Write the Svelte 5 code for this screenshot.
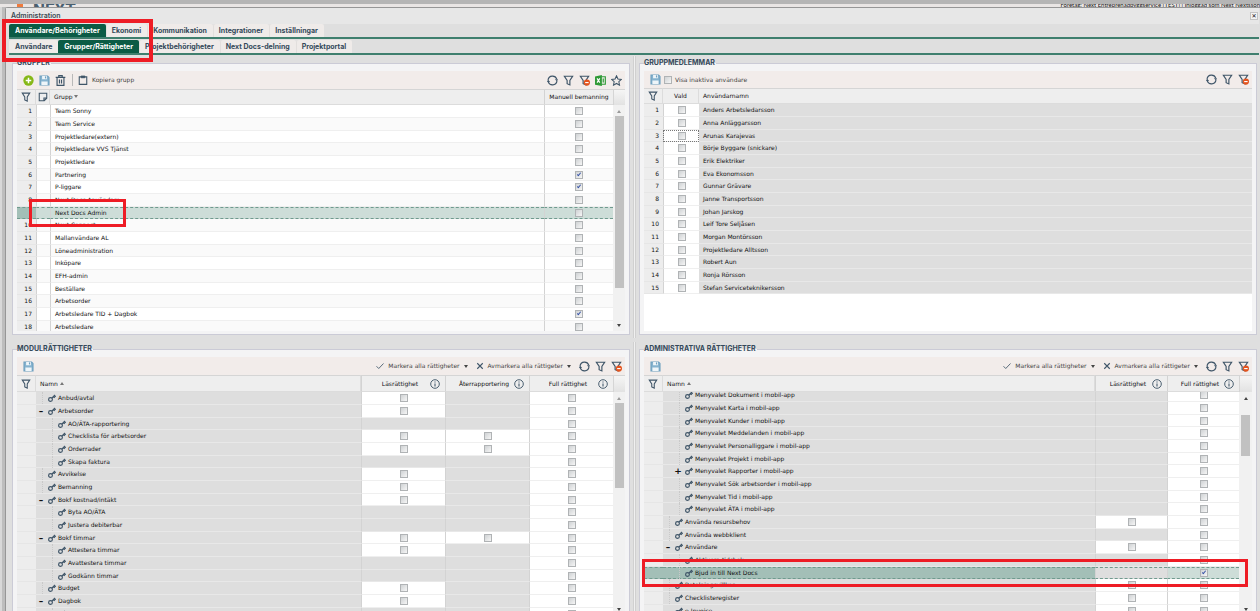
<script>
  const mainTabs = ['Användare/Behörigheter', 'Ekonomi', 'Kommunikation', 'Integrationer', 'Inställningar']
  const subTabs = ['Användare', 'Grupper/Rättigheter', 'Projektbehörigheter', 'Next Docs-delning', 'Projektportal']

  let mainTab = $state('Användare/Behörigheter')
  let subTab = $state('Grupper/Rättigheter')
  let showInactive = $state(false)

  let groups = $state([
    { name: 'Team Sonny' },
    { name: 'Team Service' },
    { name: 'Projektledare(extern)' },
    { name: 'Projektledare VVS Tjänst' },
    { name: 'Projektledare' },
    { name: 'Partnering', manual: true },
    { name: 'P-liggare', manual: true },
    { name: 'Next Docs Användare' },
    { name: 'Next Docs Admin' },
    { name: 'Next Connect' },
    { name: 'Mallanvändare AL' },
    { name: 'Löneadministration' },
    { name: 'Inköpare' },
    { name: 'EFH-admin' },
    { name: 'Beställare' },
    { name: 'Arbetsorder' },
    { name: 'Arbetsledare TID + Dagbok', manual: true },
    { name: 'Arbetsledare' },
  ])
  let selectedGroup = $state('Next Docs Admin')

  const members = [
    'Anders Arbetsledarsson', 'Anna Anläggarsson', 'Arunas Karajevas', 'Börje Byggare (snickare)',
    'Erik Elektriker', 'Eva Ekonomsson', 'Gunnar Grävare', 'Janne Transportsson', 'Johan Jarskog',
    'Leif Tore Seljåsen', 'Morgan Montörsson', 'Projektledare Alltsson', 'Robert Aun',
    'Ronja Rörsson', 'Stefan Serviceteknikersson',
  ]

  // level, sign of the expander, r = read box, b = report back box
  const modules = [
    { name: 'Anbud/avtal', level: 1, r: true },
    { name: 'Arbetsorder', level: 1, sign: '–', r: true },
    { name: 'AO/ÄTA-rapportering', level: 2 },
    { name: 'Checklista för arbetsorder', level: 2, r: true, b: true },
    { name: 'Orderrader', level: 2, r: true, b: true },
    { name: 'Skapa faktura', level: 2 },
    { name: 'Avvikelse', level: 1, r: true },
    { name: 'Bemanning', level: 1, r: true },
    { name: 'Bokf kostnad/intäkt', level: 1, sign: '–', r: true },
    { name: 'Byta AO/ÄTA', level: 2 },
    { name: 'Justera debiterbar', level: 2 },
    { name: 'Bokf timmar', level: 1, sign: '–', r: true, b: true },
    { name: 'Attestera timmar', level: 2, r: true },
    { name: 'Avattestera timmar', level: 2 },
    { name: 'Godkänn timmar', level: 2 },
    { name: 'Budget', level: 1, r: true },
    { name: 'Dagbok', level: 1, sign: '–', r: true },
    { name: 'Avattestera dagbok', level: 2 },
  ]

  const adminRights = [
    { name: 'Menyvalet Dokument i mobil-app', level: 2 },
    { name: 'Menyvalet Karta i mobil-app', level: 2 },
    { name: 'Menyvalet Kunder i mobil-app', level: 2 },
    { name: 'Menyvalet Meddelanden i mobil-app', level: 2 },
    { name: 'Menyvalet Personalliggare i mobil-app', level: 2 },
    { name: 'Menyvalet Projekt i mobil-app', level: 2 },
    { name: 'Menyvalet Rapporter i mobil-app', level: 2, sign: '+' },
    { name: 'Menyvalet Sök arbetsorder i mobil-app', level: 2 },
    { name: 'Menyvalet Tid i mobil-app', level: 2 },
    { name: 'Menyvalet ÄTA i mobil-app', level: 2 },
    { name: 'Använda resursbehov', level: 1, r: true },
    { name: 'Använda webbklient', level: 1 },
    { name: 'Användare', level: 1, sign: '–', r: true },
    { name: 'Aktivera tidsbok', level: 2 },
    { name: 'Bjud in till Next Docs', level: 2, full: true, selected: true },
    { name: 'Betalningsvillkor', level: 1, r: true },
    { name: 'Checklisteregister', level: 1, r: true },
    { name: 'e-Invoice', level: 1, sign: '–', r: true },
  ]

  function scrolledBy(node, top) {
    node.scrollTop = top
  }
</script>

{#snippet icon(name)}
  <svg class="icon" viewBox="0 0 16 16" fill="none" stroke="#3f5568" stroke-width="1.7" aria-hidden="true">
    {#if name === 'add'}
      <circle cx="8" cy="8" r="7.5" fill="#86b817" stroke="none" />
      <path d="M8 4v8M4 8h8" stroke="#fff" stroke-width="2.2" />
    {:else if name === 'save'}
      <path d="M1.5 1.5h11l2 2v11h-13z" fill="#86b3cf" stroke="#6d9fbf" />
      <path d="M4.5 1.5h7v4.5h-7zM3.5 9.5h9v5h-9z" fill="#eef5f9" stroke="none" />
      <path d="M9.5 2v3" stroke="#6d9fbf" />
    {:else if name === 'trash'}
      <path d="M1 3.5h14M5.5 3V1h5v2M3 4v11h10V4M6.5 6.5v6M9.5 6.5v6" />
    {:else if name === 'paste'}
      <path d="M2 3h12v12H2z" />
      <path d="M5 1.5h6v3H5z" fill="#3f5568" stroke-width="1" />
    {:else if name === 'refresh'}
      <path d="M1.5 7A6.6 6.6 0 0 1 14.2 6M14.5 9A6.6 6.6 0 0 1 1.8 10" />
      <path d="M11.5 6h4.500l-1.500 3.500zM4.500 10H0l1.500-3.500z" fill="#3f5568" stroke="none" />
    {:else if name === 'filter' || name === 'unfilter'}
      <path d="M2 1.8h12L10 8v6.5l-4-1.8V8z" />
      {#if name === 'unfilter'}
        <circle cx="11.5" cy="11" r="4.5" fill="#e4541e" stroke="none" />
        <path d="M9 11h5" stroke="#fff" />
      {/if}
    {:else if name === 'excel'}
      <path d="M9 2.5h6v11H9" stroke="#2f9a37" />
      <path d="M0 2l10-2v16L0 14z" fill="#2f9a37" stroke="none" />
      <path d="M3 5l4 6M7 5l-4 6" stroke="#fff" />
      <path d="M12 5v6" stroke="#2f9a37" />
    {:else if name === 'star'}
      <path d="M8 1.2l2.100 4.600 5 .6-3.700 3.400 1 5L8 12.300l-4.400 2.500 1-5L.9 6.400l5-.6z" stroke-width="1.5" />
    {:else if name === 'note'}
      <path d="M2 2h12v8l-4 4H2zM14 9.5H9.5V14" />
    {:else if name === 'check'}
      <path d="M1 8.5l4.500 4.500L15 3" />
    {:else if name === 'cross'}
      <path d="M2.5 2.5l11 11M13.5 2.5l-11 11" stroke-width="2.2" />
    {:else if name === 'info'}
      <circle cx="8" cy="8" r="6.9" stroke-width="1.5" />
      <path d="M8 7v5M8 3.8v1.8" />
    {:else if name === 'key'}
      <circle cx="5" cy="11" r="3.8" stroke-width="2.3" />
      <path d="M7.5 8.5L14 2M10.5 4.5l3 3M12.5 2.5l3 3" stroke-width="2.3" />
    {/if}
  </svg>
{/snippet}

{#snippet tool(name, label)}
  <button class="tool" title={label} aria-label={label}>{@render icon(name)}</button>
{/snippet}

{#snippet filterTools()}
  {@render tool('refresh', 'Uppdatera')}
  {@render tool('filter', 'Filtrera')}
  {@render tool('unfilter', 'Rensa filter')}
{/snippet}

{#snippet markTools()}
  <button class="text-tool mark">{@render icon('check')}<span>Markera alla rättigheter</span><i class="caret"></i></button>
  <button class="text-tool mark">{@render icon('cross')}<span>Avmarkera alla rättigeter</span><i class="caret"></i></button>
  {@render filterTools()}
{/snippet}

{#snippet scrollbar(kind)}
  <div class="scrollbar {kind}">
    <div class="corner"></div>
    <div class="track"><i class="up"></i><div class="thumb"></div><i class="down"></i></div>
  </div>
{/snippet}

{#snippet infoHead(text)}
  <th class="line"><div class="info-head"><span>{text}</span>{@render icon('info')}</div></th>
{/snippet}

{#snippet boxCell(row, show, label, checked = false)}
  <td class="line" class:off={!show}>
    {#if show}<input type="checkbox" {checked} aria-label="{label} {row.name}" />{/if}
  </td>
{/snippet}

{#snippet treeTable(rows, report)}
  <table class:report class:rights={!report}>
    <colgroup>
      <col class="c-num" /><col />
      <col class="c-right" />{#if report}<col class="c-right" />{/if}<col class="c-right" />
    </colgroup>
    <thead>
      <tr>
        <th>{@render icon('filter')}</th>
        <th class="name">Namn <i class="sort asc"></i></th>
        {@render infoHead('Läsrättighet')}
        {#if report}{@render infoHead('Återrapportering')}{/if}
        {@render infoHead('Full rättighet')}
      </tr>
    </thead>
    <tbody>
      {#each rows as row}
        <tr class:selected={row.selected}>
          <td class="num"></td>
          <td class="off name-cell">
            <div class="tree">
              {#if row.level === 2}<span class="indent"></span>{/if}
              {#if row.sign}
                <button class="toggle" aria-label="Visa {row.name}">{row.sign}</button>
              {:else}
                <span class="branch"></span>
              {/if}
              {@render icon('key')}
              <span>{row.name}</span>
            </div>
          </td>
          {@render boxCell(row, row.r, 'Läsrättighet')}
          {#if report}{@render boxCell(row, row.b, 'Återrapportering')}{/if}
          {@render boxCell(row, true, 'Full rättighet', row.full)}
        </tr>
      {/each}
    </tbody>
  </table>
{/snippet}

<div class="page">
  <div class="browser-edge"></div>
  <div class="app-strip">
    <span class="logo"><i></i>NEXT</span>
    <span class="who">Företag: Next Entreprenadbyggservice [TEST] | Inloggad som Next Nextsson</span>
  </div>

  <main class="dialog">
    <header>
      <h1>Administration</h1>
      <button class="close" aria-label="Stäng">✕</button>
    </header>

    <nav>
      {#each mainTabs as tab}
        <button class:active={tab === mainTab} onclick={() => (mainTab = tab)}>{tab}</button>
      {/each}
    </nav>
    <nav>
      {#each subTabs as tab}
        <button class:active={tab === subTab} onclick={() => (subTab = tab)}>{tab}</button>
      {/each}
    </nav>

    <div class="content">
      <div class="row top">
        <fieldset>
          <legend>GRUPPER</legend>
          <div class="toolbar">
            {@render tool('add', 'Ny grupp')}
            {@render tool('save', 'Spara')}
            {@render tool('trash', 'Ta bort')}
            <span class="sep"></span>
            <button class="text-tool">{@render icon('paste')}<span>Kopiera grupp</span></button>
            <span class="grow"></span>
            {@render filterTools()}
            {@render tool('excel', 'Exportera till Excel')}
            {@render tool('star', 'Favorit')}
          </div>
          <div class="grid">
            <div class="scroll">
              <table class="groups">
                <colgroup><col class="c-num" /><col class="c-note" /><col /><col class="c-manual" /></colgroup>
                <thead>
                  <tr>
                    <th>{@render icon('filter')}</th>
                    <th>{@render icon('note')}</th>
                    <th class="name">Grupp <i class="sort desc"></i></th>
                    <th class="line">Manuell bemanning</th>
                  </tr>
                </thead>
                <tbody>
                  {#each groups as group, i}
                    <tr class:selected={group.name === selectedGroup} onclick={() => (selectedGroup = group.name)}>
                      <td class="num">{i + 1}</td>
                      <td class="line"></td>
                      <td class="line name">{group.name}</td>
                      <td class="line">
                        <input type="checkbox" bind:checked={group.manual} aria-label="Manuell bemanning {group.name}" />
                      </td>
                    </tr>
                  {/each}
                </tbody>
              </table>
            </div>
            {@render scrollbar('groups-bar')}
            <div class="marker group-marker"></div>
          </div>
        </fieldset>

        <div class="splitter"></div>

        <fieldset>
          <legend>GRUPPMEDLEMMAR</legend>
          <div class="toolbar low">
            {@render tool('save', 'Spara')}
            <label><input type="checkbox" bind:checked={showInactive} />Visa inaktiva användare</label>
            <span class="grow"></span>
            {@render filterTools()}
          </div>
          <div class="grid">
            <div class="scroll">
              <table class="members">
                <colgroup><col class="c-num" /><col class="c-picked" /><col /></colgroup>
                <thead>
                  <tr>
                    <th>{@render icon('filter')}</th>
                    <th>Vald</th>
                    <th class="name">Användarnamn</th>
                  </tr>
                </thead>
                <tbody>
                  {#each members as member, i}
                    <tr>
                      <td class="num">{i + 1}</td>
                      <td class="line" class:focused={i === 2}>
                        <input type="checkbox" aria-label="Vald {member}" />
                      </td>
                      <td class="off name">{member}</td>
                    </tr>
                  {/each}
                </tbody>
              </table>
            </div>
          </div>
        </fieldset>
      </div>

      <div class="row bottom">
        <fieldset>
          <legend>MODULRÄTTIGHETER</legend>
          <div class="toolbar">
            {@render tool('save', 'Spara')}
            <span class="grow"></span>
            {@render markTools()}
          </div>
          <div class="grid">
            <div class="scroll">{@render treeTable(modules, true)}</div>
            {@render scrollbar('modules-bar')}
          </div>
        </fieldset>

        <div class="splitter"></div>

        <fieldset>
          <legend>ADMINISTRATIVA RÄTTIGHETER</legend>
          <div class="toolbar">
            {@render tool('save', 'Spara')}
            <span class="grow"></span>
            {@render markTools()}
          </div>
          <div class="grid">
            <div class="scroll" use:scrolledBy={3}>{@render treeTable(adminRights, false)}</div>
            {@render scrollbar('admin-bar')}
            <div class="marker admin-marker"></div>
          </div>
        </fieldset>
      </div>
    </div>
    <div class="marker tab-marker"></div>
  </main>
</div>

<style>
  :global(body) {
    margin: 0;
    background: #b5b5b5;
  }
  .page {
    display: flex;
    flex-direction: column;
    height: 100vh;
    overflow: hidden;
    font-family: 'DejaVu Sans', sans-serif;
    font-size: 6px;
    line-height: 8px;
    color: #111;
    background: linear-gradient(90deg, #d8d8d8 2px, #bdbdbd 2px);
  }
  button {
    font: inherit;
    color: inherit;
    border: 0;
    padding: 0;
    background: none;
    cursor: pointer;
  }
  .browser-edge {
    flex: none;
    height: 4px;
    background: #b5b5b5;
  }
  .app-strip {
    flex: none;
    display: flex;
    justify-content: space-between;
    height: 3px;
    overflow: hidden;
    padding-left: 17px;
    background: #e9e5e4;
  }
  .logo {
    display: flex;
    gap: 10px;
    font-family: Roboto, sans-serif;
    font-size: 17px;
    line-height: 10px;
    font-weight: 700;
    color: #4a6070;
  }
  .logo i {
    width: 6px;
    height: 4px;
    background: #ee7a3c;
  }
  .who {
    height: 8px;
    margin-top: -3px;
    font-family: Lato, sans-serif;
    white-space: nowrap;
  }
  .dialog {
    position: relative;
    flex: 1;
    min-height: 0;
    display: flex;
    flex-direction: column;
    margin-left: 5px;
    padding: 0 1px 0 3px;
    border: 1px solid #969696;
    border-width: 1px 0 0 1px;
    border-radius: 3px 0 0 0;
    background: #dfdfdf;
  }
  header {
    flex: none;
    display: flex;
    align-items: center;
    justify-content: space-between;
    height: 16px;
    margin-left: -3px;
    padding: 0 1px 0 5px;
    background: #e7e7e7;
  }
  h1,
  nav button,
  legend {
    font-family: Inter, 'Liberation Sans', sans-serif;
    font-size: 7px;
    font-weight: 700;
  }
  h1 {
    margin: 0;
    font-weight: 600;
    color: #3c4a54;
  }
  .close {
    width: 8px;
    height: 8px;
    font-size: 6px;
    line-height: 6px;
    background: #f3f3f3;
    border: 1px solid #c4c4c4;
  }
  nav {
    flex: none;
    display: flex;
    align-items: flex-end;
    height: 13px;
    border-bottom: 2px solid #3f7f6e;
  }
  nav + nav {
    height: 14px;
  }
  nav button {
    height: 13px;
    padding: 0 6px;
    color: #34495a;
    background: #efebe9;
    border-radius: 2px 2px 0 0;
  }
  nav button + button:not(.active) {
    box-shadow: inset 1px 0 #e2dfdd;
  }
  nav button.active {
    color: #fff;
    background: #0b5b45;
  }
  .content {
    flex: 1;
    min-height: 0;
    display: flex;
    flex-direction: column;
    gap: 10px;
    padding: 4px 2px 0 3px;
  }
  .row {
    display: flex;
    gap: 3px;
  }
  .bottom {
    flex: 1;
    min-height: 0;
  }
  .splitter {
    flex: none;
    width: 1px;
    margin: -3px 0;
    background: #f0f0f0;
    border: 1px solid #d0d0d0;
    border-width: 0 1px;
  }
  fieldset {
    flex: 1;
    min-width: 0;
    min-height: 0;
    display: flex;
    flex-direction: column;
    box-sizing: border-box;
    margin: 0;
    padding: 4px 4px 3px;
    border: 1px solid #cbcbd6;
    background: #f4f4f5;
  }
  .bottom fieldset {
    padding-bottom: 0;
    border-bottom: 0;
  }
  legend {
    height: 8px;
    padding: 0 1px 0 0;
    color: #34495a;
  }
  .toolbar {
    flex: none;
    display: flex;
    align-items: center;
    height: 18px;
    padding: 0 1px 0 3px;
    color: #444;
    background: #f2ecea;
  }
  .toolbar.low {
    height: 17px;
  }
  .grow {
    flex: 1;
  }
  .icon {
    display: block;
    flex: none;
    width: 10px;
    height: 10px;
  }
  .tool {
    display: grid;
    place-items: center;
    width: 16px;
    height: 16px;
  }
  .tool .icon {
    width: 11px;
    height: 11px;
  }
  .sep {
    width: 1px;
    height: 12px;
    margin: 0 5px 0 4px;
    background: #b9b9b9;
  }
  .text-tool {
    display: flex;
    align-items: center;
    gap: 4px;
  }
  .mark {
    margin-right: 8px;
  }
  .mark .icon {
    width: 8px;
    height: 8px;
  }
  .mark + .mark {
    margin-right: 5px;
  }
  .caret {
    border: 2px solid transparent;
    border-top: 3px solid #444;
    border-bottom: 0;
  }
  label {
    display: flex;
    align-items: center;
    gap: 3px;
    margin-left: 1px;
  }
  .grid {
    position: relative;
    display: flex;
    flex: 1;
    min-height: 0;
    background: #fff;
  }
  .top .grid {
    flex: 1 0 242px;
  }
  .scroll {
    flex: 1;
    min-width: 0;
    overflow: hidden;
  }
  .top .scroll {
    height: 242px;
  }
  table {
    width: 100%;
    table-layout: fixed;
    border-collapse: separate;
    border-spacing: 0;
  }
  .c-num {
    width: 19px;
  }
  .c-note {
    width: 14px;
  }
  .c-manual {
    width: 69px;
  }
  .c-picked {
    width: 36px;
  }
  .report .c-right {
    width: 84px;
  }
  .rights .c-right {
    width: 72px;
  }
  th {
    position: sticky;
    top: 0;
    z-index: 1;
    box-sizing: border-box;
    height: 16px;
    padding: 0;
    font-weight: 400;
    background: #eee;
    border-top: 1px solid #d5d5d5;
    border-bottom: 1px solid #dcdcdc;
  }
  .report th,
  .rights th {
    height: 17px;
  }
  th > .icon {
    margin: 0 auto;
  }
  th:first-child,
  th:nth-child(2) {
    border-right: 1px solid #dcdcdc;
  }
  td {
    box-sizing: border-box;
    padding: 0;
    border-bottom: 1px solid #efefef;
    white-space: nowrap;
  }
  tbody tr {
    height: 13px;
  }
  /* every third row is a pixel lower so that 18 rows fill the list */
  tbody tr:nth-child(3n) {
    height: 12px;
  }
  .groups tbody tr:nth-child(even) td {
    background: #fafafa;
  }
  .line {
    border-left: 1px solid #d3d3d3;
    text-align: center;
  }
  .name {
    padding-left: 4px;
    text-align: left;
  }
  .off {
    background: #dedede;
    border-bottom-color: #e8e8e8;
  }
  td.num,
  .groups tbody tr:nth-child(even) td.num {
    padding-right: 4px;
    text-align: right;
    background: #ededed;
    border-bottom-color: #e6e6e6;
  }
  tr.selected td,
  .groups tbody tr.selected:nth-child(odd) td {
    background: #cdddd8;
    border-top: 1px dashed #6f9a8e;
    border-bottom: 1px dashed #6f9a8e;
  }
  tr.selected td.num,
  tr.selected td.name-cell,
  .groups tbody tr.selected:nth-child(odd) td.num {
    background: #a3bfb7;
  }
  .groups tr.selected td.num {
    color: transparent;
  }
  tr.selected td.off:not(.name-cell) {
    background: #dedede;
  }
  td.focused {
    outline: 1px dotted #777;
    outline-offset: -1px;
  }
  input[type='checkbox'] {
    appearance: none;
    position: relative;
    display: block;
    box-sizing: border-box;
    width: 8px;
    height: 8px;
    margin: 0 auto;
    border: 1px solid #b0b3b5;
    background: linear-gradient(135deg, #cfd2d4, #f6f6f6);
  }
  input[type='checkbox']:checked::after {
    content: '';
    position: absolute;
    left: 2px;
    top: 0;
    width: 1px;
    height: 3px;
    border: solid #3a56a8;
    border-width: 0 1px 1px 0;
    transform: rotate(40deg);
  }
  .sort {
    display: inline-block;
    vertical-align: 1px;
    border: 2px solid transparent;
  }
  .desc {
    border-top: 3px solid #777;
    border-bottom: 0;
  }
  .asc {
    border-bottom: 3px solid #777;
    border-top: 0;
  }
  .info-head {
    display: flex;
    align-items: center;
    padding: 0 5px 0 8px;
  }
  .info-head span {
    flex: 1;
  }
  .tree {
    display: flex;
    align-items: center;
    height: 10px;
  }
  .tree .icon {
    width: 8px;
    height: 8px;
    margin-right: 2px;
  }
  .indent {
    width: 10px;
  }
  .branch {
    box-sizing: border-box;
    width: 6px;
    height: 12px;
    margin-left: 6px;
    border-left: 1px dotted #c9c9c9;
  }
  .toggle {
    width: 12px;
    padding-right: 2px;
    font-size: 9px;
    line-height: 8px;
    font-weight: 700;
  }
  .scrollbar {
    flex: none;
    display: flex;
    flex-direction: column;
    width: 12px;
    background: #f1f1f1;
  }
  .admin-bar {
    width: 13px;
  }
  .corner {
    flex: none;
    box-sizing: border-box;
    height: 16px;
    background: linear-gradient(#f5f5f5, #e2e2e2);
    border: 1px solid #d5d5d5;
    border-width: 1px 0 0 1px;
  }
  .bottom .corner {
    height: 17px;
  }
  .track {
    flex: 1;
    min-height: 0;
    display: flex;
    flex-direction: column;
    align-items: center;
    padding: 5px 0 4px;
  }
  .up {
    border: 2px solid transparent;
    border-top: 0;
    border-bottom: 3px solid #9a9a9a;
  }
  .admin-bar .up {
    border-bottom-color: #444;
  }
  .down {
    margin-top: auto;
    border: 2px solid transparent;
    border-bottom: 0;
    border-top: 3px solid #444;
  }
  .thumb {
    width: 9px;
    height: 172px;
    margin-top: 3px;
    background: #c1c1c1;
  }
  .modules-bar .thumb {
    height: 85px;
  }
  .admin-bar .thumb {
    height: 41px;
    margin-top: 15px;
  }
  .modules-bar .track,
  .admin-bar .track {
    padding-bottom: 0;
  }
  .marker {
    position: absolute;
    z-index: 2;
    box-sizing: border-box;
    border: 3px solid #ee1c25;
    pointer-events: none;
  }
  .tab-marker {
    left: -4px;
    top: 11px;
    width: 151px;
    height: 43px;
    border-width: 4px;
  }
  .group-marker {
    left: 12px;
    top: 110px;
    width: 97px;
    height: 28px;
  }
  .admin-marker {
    left: -2px;
    right: 4px;
    top: 184px;
    height: 28px;
  }
</style>
